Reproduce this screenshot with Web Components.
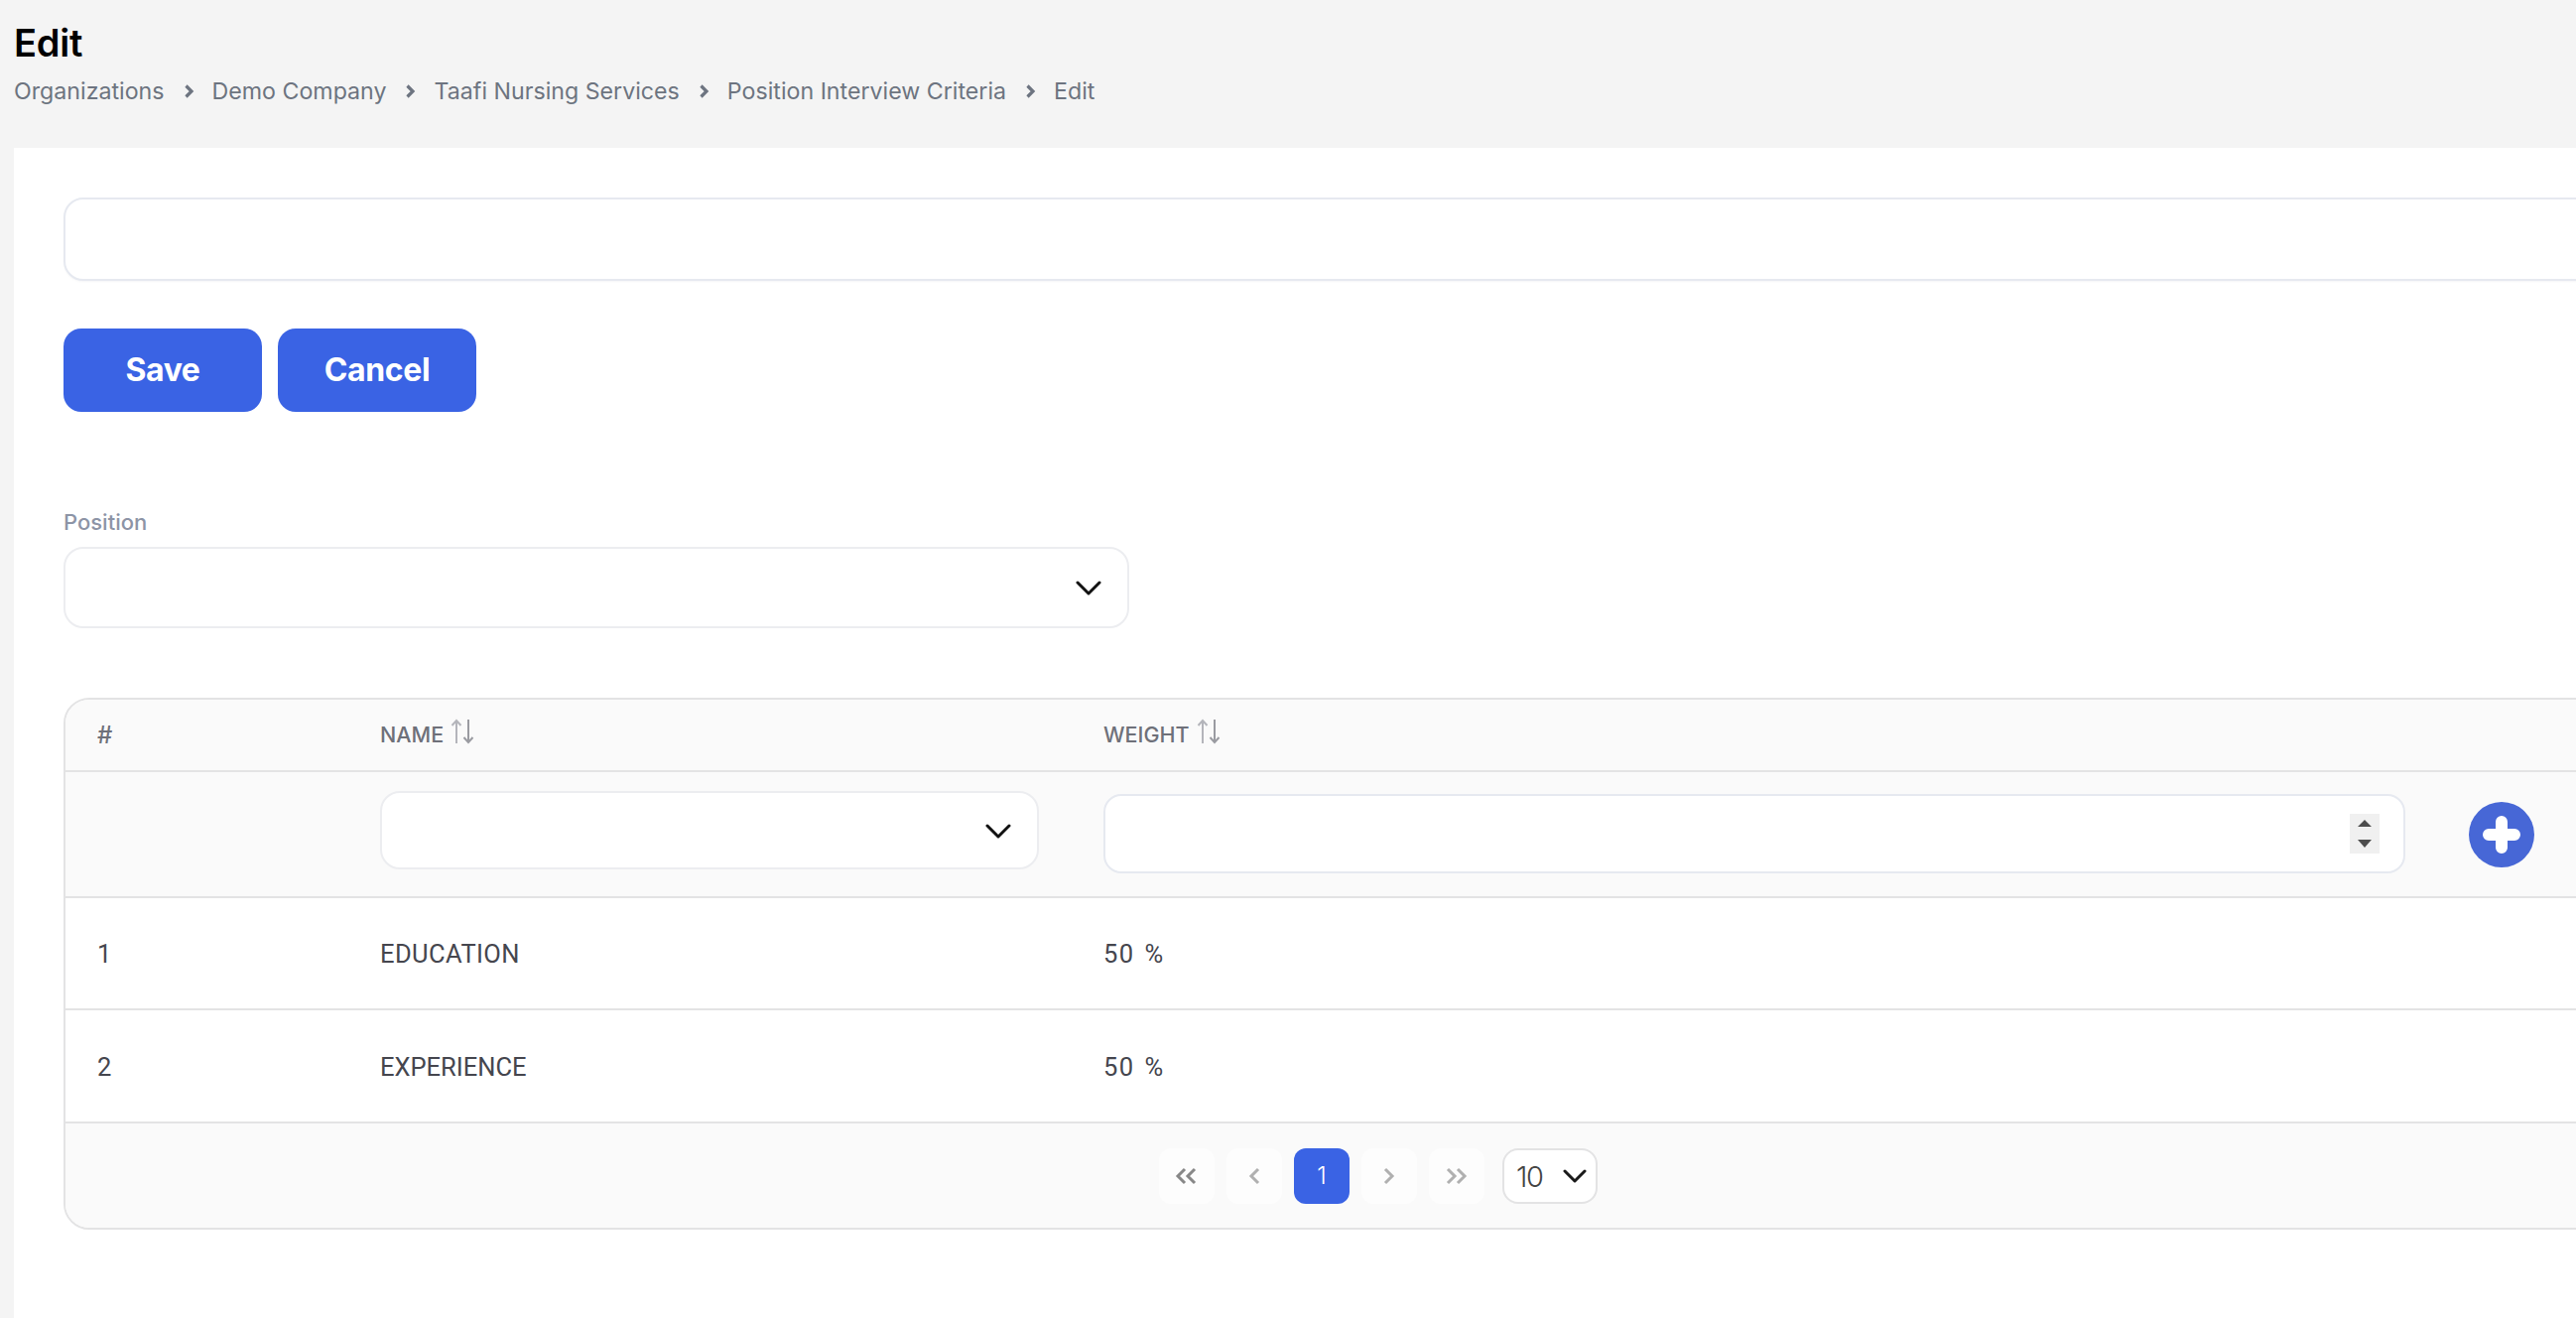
<!DOCTYPE html>
<html lang="en"><head><meta charset="utf-8"><title>Edit</title>
<style>
html,body{margin:0;padding:0;height:100%;overflow:hidden;background:#f4f4f4;font-family:"Inter","Liberation Sans",sans-serif}
</style></head><body>
<page-header></page-header>
<edit-card>
  <text-field></text-field>
  <action-bar></action-bar>
  <select-field label="Position"></select-field>
  <criteria-table></criteria-table>
</edit-card>
<script>
const CHEV=`<svg width="26" height="16" viewBox="0 0 26 16" fill="none"><path d="M2 3l11 11L24 3" stroke="#111" stroke-width="3" stroke-linecap="round" stroke-linejoin="round"/></svg>`;
function def(name,css,html){customElements.define(name,class extends HTMLElement{constructor(){super();const s=this.attachShadow({mode:"open"});s.innerHTML=`<style>${css}</style>`+(typeof html==="function"?html(this):html);}});}
function sort(){return `<svg width="24" height="26" viewBox="0 0 24 26" fill="none" stroke-width="2"><path d="M6 25V2M1.500 7L6 2l4.500 5" stroke="#b4b5bb"/><path d="M18 1v23M13.500 19l4.500 5 4.500-5" stroke="#9a9ba1"/></svg>`}
function pg(d,c,w){return `<svg width="${w}" height="20" viewBox="0 0 ${w} 20" fill="none"><path d="${d}" stroke="${c}" stroke-width="3"/></svg>`}

def("page-header",`:host{display:block;height:149px;box-sizing:border-box;padding:21px 0 0 14px}
h1{margin:0;font:600 38px/44px "Inter",sans-serif;color:#000;letter-spacing:-.2px}
nav{display:flex;align-items:center;margin-top:12px;font:400 23.200px/30px "Inter",sans-serif;color:#6d7480}
svg{margin:0 18px 0 19px}`,
`<h1>Edit</h1><nav>${["Organizations","Demo Company","Taafi Nursing Services","Position Interview Criteria","Edit"].map((t,i,a)=>`<span>${t}</span>`+(i<a.length-1?`<svg width="11" height="16" viewBox="0 0 11 16"><path d="M2.500 2.500L8 8l-5.500 5.500" fill="none" stroke="#6d7480" stroke-width="3.200"/></svg>`:"")).join("")}</nav>`);

def("edit-card",`:host{display:block;width:2660px;height:1179px;box-sizing:border-box;margin-left:14px;padding:50px 0 0 50px;background:#fff}`,`<slot></slot>`);

def("text-field",`:host{display:block;height:84px;box-sizing:border-box;border:2px solid #e6e9f0;border-radius:20px;background:#fff;box-shadow:0 1px 2px rgba(20,30,60,.04)}`,``);

def("action-button",`:host{display:flex;align-items:center;justify-content:center;width:200px;height:84px;border-radius:18px;background:#3a63e4;color:#fff;font:700 32px/1 "Inter",sans-serif;letter-spacing:-.4px}`,`<slot></slot>`);
def("action-bar",`:host{display:flex;gap:16px;margin-top:48px}`,`<action-button>Save</action-button><action-button>Cancel</action-button>`);

def("select-box",`:host{display:flex;align-items:center;justify-content:flex-end;box-sizing:border-box;border:2px solid #ecedf0;border-radius:20px;background:#fff;padding-right:26px}`,CHEV);

def("select-field",`:host{display:block;margin-top:96px}
label{display:block;font:500 22px/30px "Inter",sans-serif;color:#8d94a6;margin-bottom:10px}
select-box{width:1074px;height:82px}`,h=>`<label>${h.getAttribute("label")}</label><select-box></select-box>`);

def("page-button",`:host{display:flex;align-items:center;justify-content:center;width:56px;height:56px;border-radius:12px;background:#fdfdfd;color:#fff;font:300 24px/1 "Inter",sans-serif}
:host([active]){background:#3a63e4}`,`<slot></slot>`);

def("criteria-table",`:host{display:block;width:2596px;margin-top:70px;box-sizing:border-box;border:2px solid #e3e3e4;border-radius:26px;overflow:hidden;background:#fff;color:#45464e}
.row{display:grid;grid-template-columns:317px 729px 1376px 1fr;align-items:center;border-bottom:2px solid #e3e3e4;box-sizing:border-box}
.row>:first-child{padding-left:32px}
.head{height:73px;background:#fafafa;font:500 21.500px/1 "Inter",sans-serif;color:#6e7079}
.head span{display:flex;align-items:center;gap:7px}
.head svg{margin-top:-8px}
.hash{font-size:24px}
.filter{height:127px;background:#fafafa}
.body{height:114px;padding-top:3px;font:400 25.500px/1 "Roboto",sans-serif}
.r1{height:113px}
.wide{letter-spacing:.4px}
.pct{letter-spacing:1.500px;word-spacing:2px}
select-box{width:664px;height:79px;margin-top:-8px}
.num{display:flex;align-items:center;justify-content:flex-end;width:1312px;height:80px;box-sizing:border-box;border:2px solid #e6e9f0;border-radius:18px;background:#fff;padding-right:24px;margin-top:-1px}
.spin{width:30px;height:40px;background:#f0f0f0;display:flex;align-items:center;justify-content:center}
.add{width:66px;height:66px;border-radius:50%;background:#4767d6;display:flex;align-items:center;justify-content:center}
.foot{height:105px;background:#fafafa;display:flex;align-items:flex-start;padding:25px 0 0 1102px;box-sizing:border-box;gap:12px}
.size{display:flex;align-items:center;justify-content:space-between;box-sizing:border-box;width:96px;height:56px;margin-left:6px;border:2px solid #e3e3e4;border-radius:16px;background:#fff;padding:0 9px 0 12px;font:300 29px/1 "Inter",sans-serif;letter-spacing:-1.500px;color:#444}`,
`<div class="row head"><span class="hash">#</span>
 <span>NAME ${sort()}</span><span>WEIGHT ${sort()}</span><span></span></div>
<div class="row filter"><span></span><select-box></select-box>
 <div class="num"><div class="spin"><svg width="14" height="28" viewBox="0 0 14 28"><path d="M7 0l7 7H0zM0 20h14l-7 8z" fill="#4d4d4d"/></svg></div></div>
 <div class="add"><svg width="38" height="38" viewBox="0 0 38 38"><path d="M19 6v26M6 19h26" stroke="#fff" stroke-width="12" stroke-linecap="round"/></svg></div></div>
<div class="row body r1"><span>1</span><span class="wide">EDUCATION</span><span class="pct">50 %</span><span></span></div>
<div class="row body"><span>2</span><span>EXPERIENCE</span><span class="pct">50 %</span><span></span></div>
<div class="foot">
 <page-button>${pg("M11 3L4 10l7 7M21 3l-7 7 7 7","#888",26)}</page-button>
 <page-button>${pg("M11 3L4 10l7 7","#b0b0b0",14)}</page-button>
 <page-button active>1</page-button>
 <page-button>${pg("M3 3l7 7-7 7","#b0b0b0",14)}</page-button>
 <page-button>${pg("M3 3l7 7-7 7M13 3l7 7-7 7","#b0b0b0",24)}</page-button>
 <div class="size"><span>10</span><svg width="24" height="16" viewBox="0 0 24 16" fill="none"><path d="M2 3l10 10L22 3" stroke="#1a1a1a" stroke-width="3" stroke-linecap="round" stroke-linejoin="round"/></svg></div>
</div>`);
</script>
</body></html>
